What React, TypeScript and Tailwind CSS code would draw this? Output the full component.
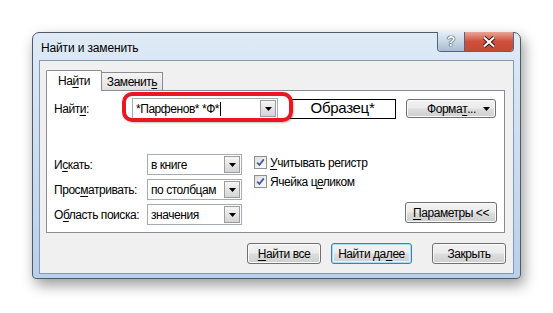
import type { ReactNode } from 'react';

const btnBg = 'bg-[linear-gradient(#f3f3f3_0%,#ebebeb_48%,#dddddd_52%,#cfcfcf_100%)]';

function U({ children }: { children: ReactNode }) {
  return <span className="underline decoration-1 underline-offset-[2px]">{children}</span>;
}

function Arrow() {
  return (
    <svg width="7" height="4" viewBox="0 0 7 4">
      <polygon points="0,0 7,0 3.5,4" fill="#000" />
    </svg>
  );
}

function Combo({ className, children }: { className: string; children: ReactNode }) {
  return (
    <div className={`flex h-[21px] items-stretch border border-[#a5acb5] bg-white ${className}`}>
      <div className="flex flex-1 items-center pl-[3px] text-black">{children}</div>
      <div className="m-px flex w-[16px] items-center justify-center border border-[#9c9c9c] bg-linear-to-b from-[#f6f6f6] to-[#d4d4d4]">
        <Arrow />
      </div>
    </div>
  );
}

function Btn({ className, focus, children }: { className: string; focus?: boolean; children: ReactNode }) {
  return (
    <div
      className={`flex items-center justify-center rounded-[3px] border text-black ${btnBg} ${
        focus
          ? 'border-[#3c7fb1] shadow-[inset_0_0_0_1px_#a9def8,inset_0_0_0_2px_#e4f4fc]'
          : 'border-[#707070] shadow-[inset_0_0_0_1px_#fbfbfb]'
      } ${className}`}
    >
      {children}
    </div>
  );
}

function Check({ children }: { children: ReactNode }) {
  return (
    <div className="flex h-[17px] items-center gap-[3px] text-black">
      <div className="flex h-[13px] w-[13px] items-center justify-center border border-[#8e8f8f] bg-linear-to-br from-[#dedede] to-[#fbfbfb]">
        <svg width="9" height="9" viewBox="0 0 9 9">
          <path d="M1.2 4.6 L3.4 7 L7.8 1.4" stroke="#41579a" strokeWidth="1.7" fill="none" />
        </svg>
      </div>
      <span>{children}</span>
    </div>
  );
}

export default function App() {
  return (
    <div className="h-[313px] w-[553px] overflow-hidden bg-white pl-[32px] pt-[32px] font-['Liberation_Sans',Arial,sans-serif]">
      <div className="flex h-[247px] w-[489px] flex-col rounded-t-[7px] rounded-b-[4px] border border-[#4f5a68] bg-linear-to-b from-[#dfeaf6] to-[#b9d0ea] shadow-[3px_6px_14px_rgba(0,0,0,0.4)]">
        {/* title bar */}
        <div className="flex h-[27px] justify-between">
          <div className="flex items-center pl-[8px] pt-[2px] text-[12px] tracking-[-0.15px] text-black">Найти и заменить</div>
          <div className="-mt-px mr-[6px] flex h-[20px] overflow-hidden rounded-b-[4px] border border-t-0 border-[#55647a]">
            <div className="flex w-[27px] items-center justify-center border-r border-[#55647a] bg-linear-to-b from-[#e6eef7] via-[#c8d6e6] to-[#a9bcd3] text-[14px] font-bold text-white [text-shadow:0_0_1px_#26344c,0_0_1px_#26344c,0_0_1px_#26344c]">
              ?
            </div>
            <div className="flex w-[48px] items-center justify-center bg-linear-to-b from-[#e7a597] via-[#cf4f3b] to-[#c44a36]">
              <svg width="14" height="12" viewBox="0 0 14 12">
                <path d="M2 1.5 L12 10.5 M12 1.5 L2 10.5" stroke="#3b1610" strokeWidth="4" />
                <path d="M2 1.5 L12 10.5 M12 1.5 L2 10.5" stroke="#fff" strokeWidth="2.2" />
              </svg>
            </div>
          </div>
        </div>

        {/* client area */}
        <div className="mx-[6px] flex h-[214px] w-[475px] flex-col border border-[#8598b1] bg-[#f0f0f0] pl-[6px] pr-[7px] pt-[9px] text-[12px] tracking-[-0.45px]">
          {/* tabs */}
          <div className="flex items-end">
            <div className="relative z-10 -mb-px flex h-[21px] w-[56px] items-center justify-center rounded-t-[2px] border border-b-0 border-[#898c95] bg-white text-black">
              На<U>й</U>ти
            </div>
            <div className="-ml-px flex h-[18px] w-[62px] items-center justify-center border border-b-0 border-[#898c95] bg-linear-to-b from-[#f4f4f4] to-[#e1e1e1] text-black">
              Заменит<U>ь</U>
            </div>
          </div>

          {/* tab panel */}
          <div className="flex h-[143px] w-[459px] flex-col border border-[#898c95] bg-white px-[7px] pt-[7px]">
            <div className="flex h-[21px] items-center">
              <div className="w-[78px] text-black">
                Найт<U>и</U>:
              </div>
              <div className="relative">
                <Combo className="w-[146px]">
                  *Парфенов* *Ф*<span className="ml-px inline-block h-[14px] w-px bg-black" />
                </Combo>
                <div className="pointer-events-none absolute -left-[10px] -top-[6px] z-10 h-[30px] w-[171px] rounded-[10px] border-[4px] border-[#ea1622] shadow-[1px_1px_2px_rgba(0,0,0,0.25)]" />
              </div>
              <div className="ml-[11px] flex h-[20px] w-[107px] items-center justify-center border border-black bg-white text-[15px] tracking-[-0.3px] text-black">
                Образец*
              </div>
              <Btn className="relative ml-[10px] h-[19px] w-[90px] !justify-start pl-[20px]">
                Форма<U>т</U>...
                <span className="absolute right-[5px] top-[7px] flex">
                  <Arrow />
                </span>
              </Btn>
            </div>

            <div className="mt-[35px] flex">
              <div className="flex flex-col gap-[4px]">
                <div className="flex h-[21px] items-center">
                  <div className="w-[93px] text-black">
                    И<U>с</U>кать:
                  </div>
                  <Combo className="w-[95px]">в книге</Combo>
                </div>
                <div className="flex h-[21px] items-center">
                  <div className="w-[93px] text-black">
                    Прос<U>м</U>атривать:
                  </div>
                  <Combo className="w-[95px]">по столбцам</Combo>
                </div>
                <div className="flex h-[21px] items-center">
                  <div className="w-[93px] text-black">
                    О<U>б</U>ласть поиска:
                  </div>
                  <Combo className="w-[95px]">значения</Combo>
                </div>
              </div>

              <div className="ml-[12px] flex flex-col gap-[2px]">
                <Check>
                  <U>У</U>читывать регистр
                </Check>
                <Check>
                  Ячейка ц<U>е</U>ликом
                </Check>
              </div>

              <Btn className="mb-[2px] ml-auto h-[21px] w-[92px] self-end">
                <U>П</U>араметры &lt;&lt;
              </Btn>
            </div>
          </div>

          {/* bottom buttons */}
          <div className="mt-[10px] flex justify-end">
            <Btn className="h-[21px] w-[74px]">
              <U>Н</U>айти все
            </Btn>
            <Btn focus className="ml-[10px] h-[21px] w-[81px]">
              Найти да<U>л</U>ее
            </Btn>
            <Btn className="ml-[20px] h-[21px] w-[74px]">Закрыть</Btn>
          </div>
        </div>
      </div>
    </div>
  );
}
